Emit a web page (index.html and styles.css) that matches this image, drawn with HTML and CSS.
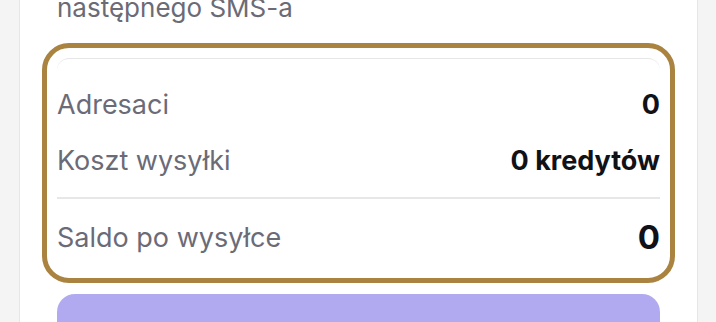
FILE: index.html
```html
<!DOCTYPE html>
<html lang="pl">
<head>
  <meta charset="UTF-8">
  <meta name="viewport" content="width=device-width, initial-scale=1.0">
  <title>Podsumowanie wysyłki</title>
  <link rel="stylesheet" href="styles.css">
</head>
<body>
  <div class="card">
    <p class="hint">następnego SMS-a</p>

    <div class="summary">
      <div class="row">
        <span class="label">Adresaci</span>
        <span class="value">0</span>
      </div>
      <div class="row">
        <span class="label">Koszt wysyłki</span>
        <span class="value">0 kredytów</span>
      </div>
      <div class="divider"></div>
      <div class="row total">
        <span class="label">Saldo po wysyłce</span>
        <span class="value">0</span>
      </div>
    </div>

    <button class="btn-send" disabled></button>
  </div>
</body>
</html>
```

FILE: styles.css
```css
body {
  margin: 0;
  background: #f4f4f5;
  font-family: Inter, "Noto Sans", sans-serif;
  overflow: hidden;
}

.card {
  margin-left: 19px;
  width: 679px;
  height: 340px;
  background: #fff;
  border-left: 1px solid #e6e6e8;
  border-right: 1px solid #e6e6e8;
  padding: 0 37px;
  box-sizing: border-box;
  margin-top: -10px;
}

.hint {
  margin: 0 0 32px;
  font-size: 26px;
  line-height: 36px;
  color: #6b6b76;
}

.summary {
  border-top: 1px solid #e6e6e8;
  border-radius: 12px;
  padding: 27px 0 13px;
  outline: 5px solid #a9833f;
  outline-offset: 10px;
}

.row {
  display: flex;
  justify-content: space-between;
  align-items: center;
  height: 36px;
}

.row + .row {
  margin-top: 20px;
}

.label {
  font-size: 27px;
  color: #6b6b78;
}

.value {
  font-size: 27px;
  font-weight: 700;
  color: #111118;
}

.divider {
  height: 2px;
  background: #e7e7e9;
  margin-top: 19px;
}

.row.total {
  margin-top: 20px;
}

.row.total .value {
  font-size: 33px;
}

.btn-send {
  display: block;
  width: 100%;
  height: 64px;
  margin-top: 26px;
  border: none;
  border-radius: 18px;
  background: #b1aaf0;
}
```
